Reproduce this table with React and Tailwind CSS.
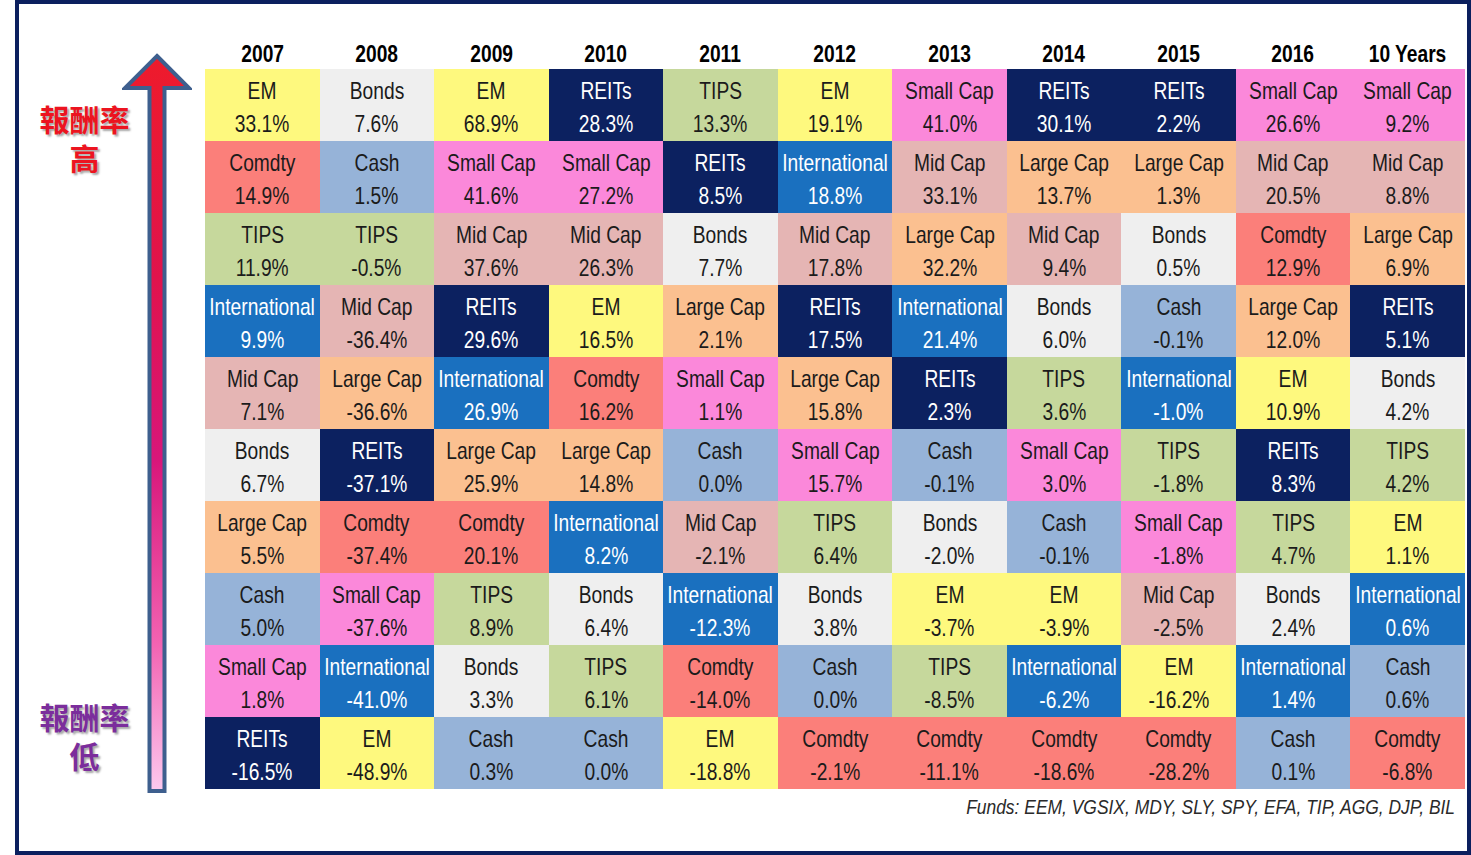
import React from 'react';

// asset class -> cell colours
const styles = {
  EM: 'bg-[#fef97e] text-[#1b1b1b]',
  Bonds: 'bg-[#efefef] text-[#1b1b1b]',
  REITs: 'bg-[#0c2160] text-white',
  TIPS: 'bg-[#c6d89c] text-[#1b1b1b]',
  'Small Cap': 'bg-[#fb88da] text-[#1b1b1b]',
  Comdty: 'bg-[#fb7f7a] text-[#1b1b1b]',
  Cash: 'bg-[#96b3d8] text-[#1b1b1b]',
  International: 'bg-[#1a70bf] text-white',
  'Mid Cap': 'bg-[#e5b5b4] text-[#1b1b1b]',
  'Large Cap': 'bg-[#fbc090] text-[#1b1b1b]',
};

const years = ['2007', '2008', '2009', '2010', '2011', '2012', '2013', '2014', '2015', '2016', '10 Years'];

const columns = [
  [['EM', '33.1%'], ['Comdty', '14.9%'], ['TIPS', '11.9%'], ['International', '9.9%'], ['Mid Cap', '7.1%'], ['Bonds', '6.7%'], ['Large Cap', '5.5%'], ['Cash', '5.0%'], ['Small Cap', '1.8%'], ['REITs', '-16.5%']],
  [['Bonds', '7.6%'], ['Cash', '1.5%'], ['TIPS', '-0.5%'], ['Mid Cap', '-36.4%'], ['Large Cap', '-36.6%'], ['REITs', '-37.1%'], ['Comdty', '-37.4%'], ['Small Cap', '-37.6%'], ['International', '-41.0%'], ['EM', '-48.9%']],
  [['EM', '68.9%'], ['Small Cap', '41.6%'], ['Mid Cap', '37.6%'], ['REITs', '29.6%'], ['International', '26.9%'], ['Large Cap', '25.9%'], ['Comdty', '20.1%'], ['TIPS', '8.9%'], ['Bonds', '3.3%'], ['Cash', '0.3%']],
  [['REITs', '28.3%'], ['Small Cap', '27.2%'], ['Mid Cap', '26.3%'], ['EM', '16.5%'], ['Comdty', '16.2%'], ['Large Cap', '14.8%'], ['International', '8.2%'], ['Bonds', '6.4%'], ['TIPS', '6.1%'], ['Cash', '0.0%']],
  [['TIPS', '13.3%'], ['REITs', '8.5%'], ['Bonds', '7.7%'], ['Large Cap', '2.1%'], ['Small Cap', '1.1%'], ['Cash', '0.0%'], ['Mid Cap', '-2.1%'], ['International', '-12.3%'], ['Comdty', '-14.0%'], ['EM', '-18.8%']],
  [['EM', '19.1%'], ['International', '18.8%'], ['Mid Cap', '17.8%'], ['REITs', '17.5%'], ['Large Cap', '15.8%'], ['Small Cap', '15.7%'], ['TIPS', '6.4%'], ['Bonds', '3.8%'], ['Cash', '0.0%'], ['Comdty', '-2.1%']],
  [['Small Cap', '41.0%'], ['Mid Cap', '33.1%'], ['Large Cap', '32.2%'], ['International', '21.4%'], ['REITs', '2.3%'], ['Cash', '-0.1%'], ['Bonds', '-2.0%'], ['EM', '-3.7%'], ['TIPS', '-8.5%'], ['Comdty', '-11.1%']],
  [['REITs', '30.1%'], ['Large Cap', '13.7%'], ['Mid Cap', '9.4%'], ['Bonds', '6.0%'], ['TIPS', '3.6%'], ['Small Cap', '3.0%'], ['Cash', '-0.1%'], ['EM', '-3.9%'], ['International', '-6.2%'], ['Comdty', '-18.6%']],
  [['REITs', '2.2%'], ['Large Cap', '1.3%'], ['Bonds', '0.5%'], ['Cash', '-0.1%'], ['International', '-1.0%'], ['TIPS', '-1.8%'], ['Small Cap', '-1.8%'], ['Mid Cap', '-2.5%'], ['EM', '-16.2%'], ['Comdty', '-28.2%']],
  [['Small Cap', '26.6%'], ['Mid Cap', '20.5%'], ['Comdty', '12.9%'], ['Large Cap', '12.0%'], ['EM', '10.9%'], ['REITs', '8.3%'], ['TIPS', '4.7%'], ['Bonds', '2.4%'], ['International', '1.4%'], ['Cash', '0.1%']],
  [['Small Cap', '9.2%'], ['Mid Cap', '8.8%'], ['Large Cap', '6.9%'], ['REITs', '5.1%'], ['Bonds', '4.2%'], ['TIPS', '4.2%'], ['EM', '1.1%'], ['International', '0.6%'], ['Cash', '0.6%'], ['Comdty', '-6.8%']],
];

const Narrow = ({ children }) => (
  <span className="inline-block whitespace-nowrap scale-x-[0.8]">{children}</span>
);

const Cell = ({ name, value }) => (
  <div className={`h-[72px] flex flex-col items-center justify-center pt-[4px] text-[24px] leading-[33px] ${styles[name]}`}>
    <Narrow>{name}</Narrow>
    <Narrow>{value}</Narrow>
  </div>
);

const Arrow = () => (
  <svg width="70" height="742" viewBox="0 0 70 742" className="block">
    <defs>
      <linearGradient id="arrowFill" x1="0" y1="0" x2="0" y2="1">
        <stop offset="0" stopColor="#ee1b2b" />
        <stop offset="0.3" stopColor="#e0134c" />
        <stop offset="0.55" stopColor="#d8167a" />
        <stop offset="0.8" stopColor="#f263b2" />
        <stop offset="1" stopColor="#fcc9ee" />
      </linearGradient>
    </defs>
    <path
      d="M35 3 L67 35 L42.5 35 L42.5 738 L27.5 738 L27.5 35 L3 35 Z"
      fill="url(#arrowFill)"
      stroke="#3e5f8e"
      strokeWidth="4"
      strokeLinejoin="miter"
    />
  </svg>
);

const Label = ({ color, low }) => (
  <div
    className={`flex flex-col items-center text-[30px] leading-[39px] font-bold whitespace-nowrap ${color}`}
    style={{ textShadow: '2px 2px 2px rgba(0,0,0,0.35)' }}
  >
    <span>報酬率</span>
    <span>{low ? '低' : '高'}</span>
  </div>
);

export default function App() {
  return (
    <div className="w-[1471px] h-[855px] bg-white" style={{ fontFamily: '"Liberation Sans", "Noto Sans CJK TC", Arial, sans-serif' }}>
      <div className="ml-[15px] w-[1456px] h-[855px] border-4 border-[#0b1f5e] flex">
        {/* left side: labels + arrow */}
        <div className="w-[186px] flex shrink-0">
          <div className="w-[103px] pl-[28px] flex flex-col justify-between pt-[97px] pb-[74px]">
            <Label color="text-[#ec1420]" />
            <Label color="text-[#7b2d9c]" low />
          </div>
          <div className="pt-[49px]">
            <Arrow />
          </div>
        </div>

        {/* chart */}
        <div className="w-[1260px] shrink-0 pt-[32px]">
          <div className="grid grid-cols-11 h-[33px]">
            {years.map((y) => (
              <div key={y} className="flex items-center justify-center text-[24px] font-bold text-black">
                <Narrow>{y}</Narrow>
              </div>
            ))}
          </div>
          <div className="grid grid-cols-11">
            {Array.from({ length: 10 }).map((_, r) =>
              columns.map((col, c) => <Cell key={`${r}-${c}`} name={col[r][0]} value={col[r][1]} />)
            )}
          </div>
          <div className="flex justify-end pr-[10px] pt-[2px] text-[21px] italic text-[#2a2a2a]">
            <span className="inline-block whitespace-nowrap scale-x-[0.83] origin-right">
              Funds: EEM, VGSIX, MDY, SLY, SPY, EFA, TIP, AGG, DJP, BIL
            </span>
          </div>
        </div>
      </div>
    </div>
  );
}
